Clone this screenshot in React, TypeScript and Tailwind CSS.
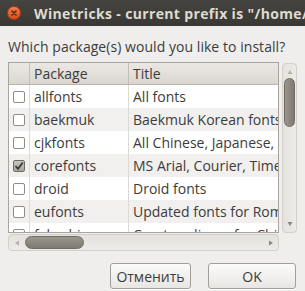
const rows = [
  { pkg: 'allfonts', title: 'All fonts', checked: false },
  { pkg: 'baekmuk', title: 'Baekmuk Korean fonts', checked: false },
  { pkg: 'cjkfonts', title: 'All Chinese, Japanese, Korean fonts and aliases', checked: false },
  { pkg: 'corefonts', title: 'MS Arial, Courier, Times fonts', checked: true },
  { pkg: 'droid', title: 'Droid fonts', checked: false },
  { pkg: 'eufonts', title: 'Updated fonts for Romanian and Bulgarian', checked: false },
  { pkg: 'fakechinese', title: 'Creates aliases for Chinese fonts', checked: false },
]

function Checkbox({ checked }: { checked: boolean }) {
  return (
    <div
      className={`w-[12px] h-[12px] rounded-[2px] border flex items-center justify-center ${
        checked ? 'border-[#6f6c66] bg-gradient-to-b from-[#c9c6c0] to-[#a9a59e]' : 'border-[#8f8c86] bg-white'
      }`}
    >
      {checked && (
        <svg width="10" height="10" viewBox="0 0 10 10">
          <path d="M1.5 5 L4 7.8 L8.8 1.5" fill="none" stroke="#3a3935" strokeWidth="1.8" />
        </svg>
      )}
    </div>
  )
}

export default function App() {
  return (
    <div
      className="w-[305px] h-[291px] overflow-hidden bg-[#efeeec] text-[#3c3c3c]"
      style={{ fontFamily: '"Open Sans", "DejaVu Sans", sans-serif' }}
    >
      {/* Title bar */}
      <div className="h-[26px] flex items-center bg-gradient-to-b from-[#45443f] to-[#393834] whitespace-nowrap overflow-hidden">
        <div className="ml-[7px] w-[14px] h-[14px] shrink-0 rounded-full bg-gradient-to-b from-[#f47a4a] to-[#dc4a18] border border-[#b53c10] flex items-center justify-center">
          <svg width="8" height="8" viewBox="0 0 8 8">
            <path d="M2 2 L6 6 M6 2 L2 6" stroke="#4a2a1c" strokeWidth="1.6" strokeLinecap="round" />
          </svg>
        </div>
        <span className="ml-[13px] text-[14px] font-bold text-[#dfdbd2] tracking-[0.35px]">
          Winetricks - current prefix is "/home/user/.wine"
        </span>
      </div>

      <div className="px-[8px]">
        <div className="mt-[12px] h-[18px] leading-[18px] text-[14px] whitespace-nowrap tracking-[0.05px]">
          Which package(s) would you like to install?
        </div>

        <div className="mt-[6px] flex gap-[3px]">
          <div className="flex flex-col">
            {/* List */}
            <div className="w-[271px] h-[171px] border border-[#a9a59e] bg-white overflow-hidden">
              <div className="flex h-[22px] bg-gradient-to-b from-[#ebe8e4] to-[#dad6cf] border-b border-[#b9b5ae] text-[14px] whitespace-nowrap">
                <div className="w-[21px] shrink-0 border-r border-[#c2beb7]" />
                <div className="w-[99px] shrink-0 border-r border-[#c2beb7] pl-[4px] leading-[22px]">Package</div>
                <div className="pl-[4px] leading-[22px]">Title</div>
              </div>
              {rows.map((r, i) => (
                <div
                  key={r.pkg}
                  className={`flex h-[23px] text-[14px] whitespace-nowrap ${i % 2 === 1 ? 'bg-[#f1f0ee]' : 'bg-white'}`}
                >
                  <div className="w-[21px] shrink-0 border-r border-[#dcdad6] flex items-center justify-center">
                    <Checkbox checked={r.checked} />
                  </div>
                  <div className="w-[99px] shrink-0 border-r border-[#dcdad6] pl-[4px] leading-[23px]">{r.pkg}</div>
                  <div className="pl-[4px] leading-[23px]">{r.title}</div>
                </div>
              ))}
            </div>

            {/* Horizontal scrollbar */}
            <div className="mt-[1px] w-[271px] h-[17px] rounded-[4px] border border-[#d3d0ca] bg-gradient-to-b from-[#e4e2de] to-[#ecebe8] flex items-center pl-[5px] pr-[4px]">
              <svg width="6" height="6" viewBox="0 0 6 6" className="shrink-0">
                <path d="M5 0.5 L1 3 L5 5.5 Z" fill="#b4b0a9" />
              </svg>
              <div className="ml-[5px] w-[59px] h-[13px] rounded-full border border-[#6f6b63] bg-gradient-to-b from-[#9a968e] to-[#7f7b73]" />
              <div className="flex-1" />
              <svg width="6" height="6" viewBox="0 0 6 6" className="shrink-0">
                <path d="M1 0.5 L5 3 L1 5.5 Z" fill="#8a867f" />
              </svg>
            </div>
          </div>

          {/* Vertical scrollbar */}
          <div className="mt-[1px] w-[15px] h-[170px] rounded-[4px] border border-[#d3d0ca] bg-gradient-to-r from-[#e4e2de] to-[#ecebe8] flex flex-col items-center pt-[5px] pb-[5px]">
            <svg width="6" height="6" viewBox="0 0 6 6" className="shrink-0">
              <path d="M0.5 5 L3 1 L5.5 5 Z" fill="#b4b0a9" />
            </svg>
            <div className="mt-[3px] w-[11px] h-[49px] rounded-full border border-[#6f6b63] bg-gradient-to-r from-[#9a968e] to-[#7f7b73]" />
            <div className="flex-1" />
            <svg width="6" height="6" viewBox="0 0 6 6" className="shrink-0">
              <path d="M0.5 1 L3 5 L5.5 1 Z" fill="#8a867f" />
            </svg>
          </div>
        </div>

        {/* Buttons */}
        <div className="mt-[12px] flex justify-end gap-[17px] pr-[1px]">
          <button className="w-[81px] h-[26px] rounded-[3px] border border-[#a39f98] bg-gradient-to-b from-[#fbfbfa] to-[#e8e6e3] text-[14px] text-[#3c3c3c] shadow-[0_1px_0_#ffffff]">
            Отменить
          </button>
          <button className="w-[88px] h-[26px] rounded-[3px] border border-[#a39f98] bg-gradient-to-b from-[#fbfbfa] to-[#e8e6e3] text-[14px] text-[#3c3c3c] shadow-[0_1px_0_#ffffff]">
            OK
          </button>
        </div>
      </div>
    </div>
  )
}
